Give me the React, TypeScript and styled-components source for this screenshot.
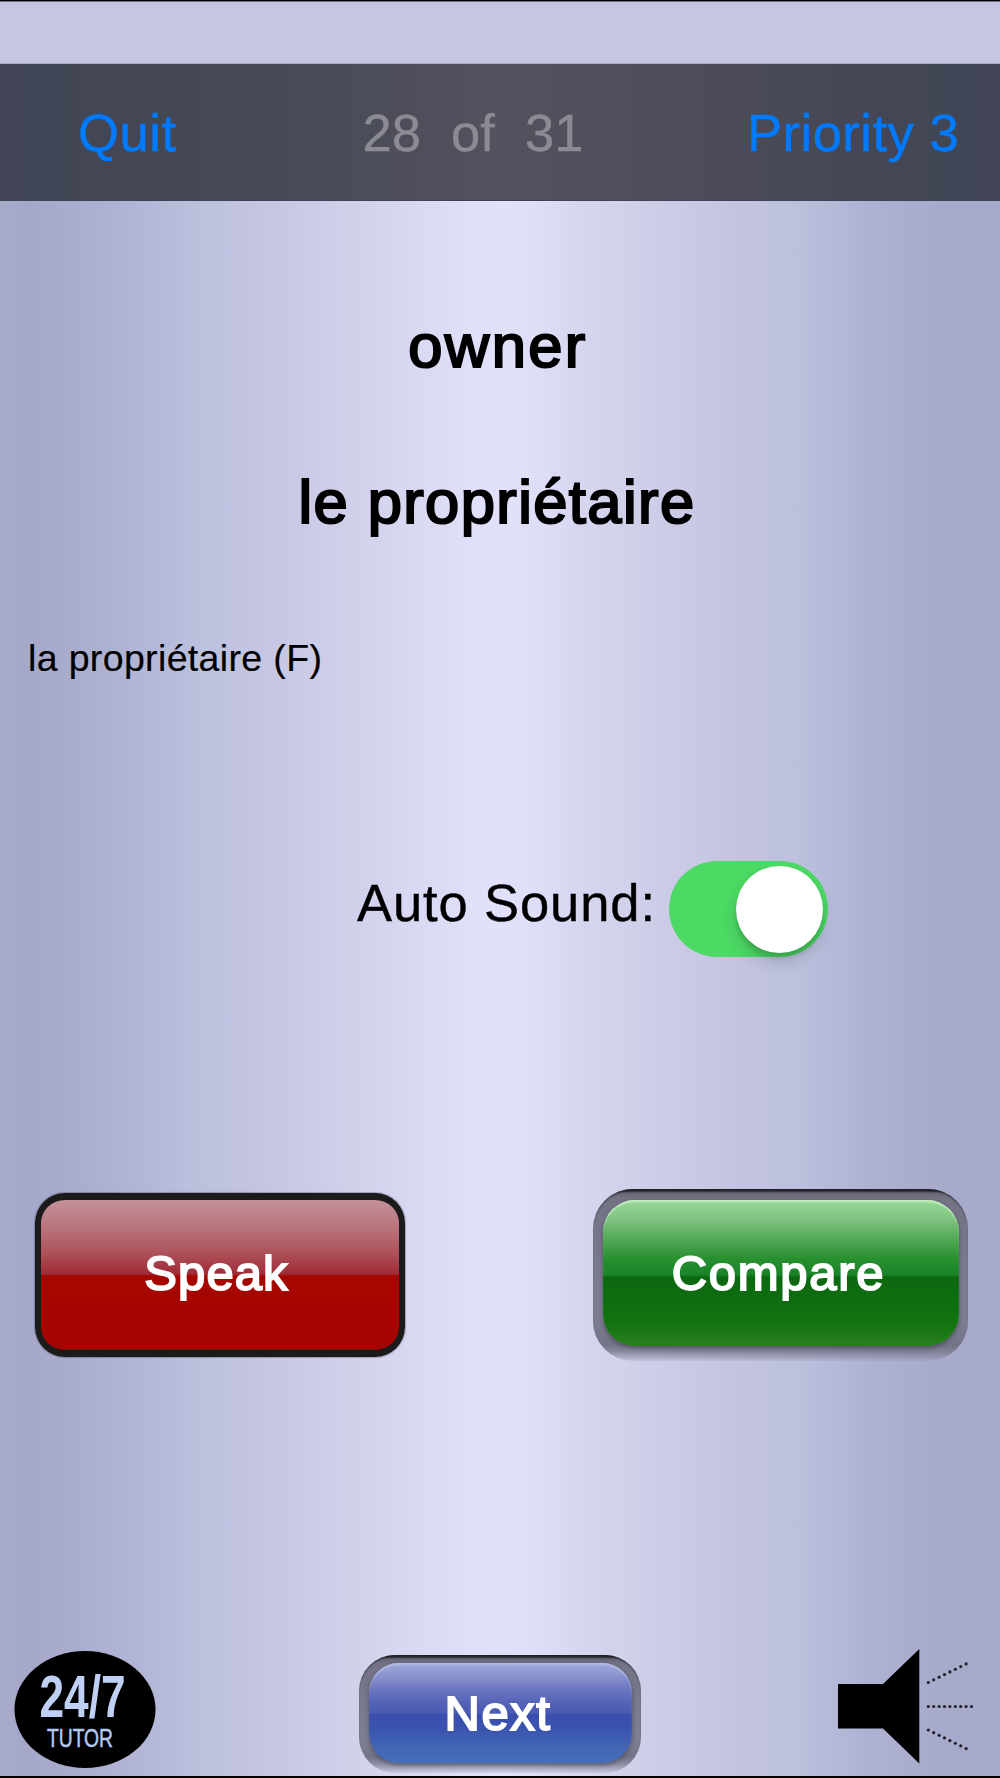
import React, { useState } from "react";
import styled, { createGlobalStyle } from "styled-components";

const GlobalStyle = createGlobalStyle`
  * { box-sizing: border-box; }
  body { margin: 0; background: #000; }
`;

const Screen = styled.div`
  width: 1000px;
  height: 1778px;
  display: flex;
  flex-direction: column;
  overflow: hidden;
  border-top: 1px solid #000;
  border-bottom: 2px solid #000;
  font-family: "Liberation Sans", Arial, Helvetica, sans-serif;
  color: #000;
  background: linear-gradient(
    90deg,
    #a8aaca 0%,
    #a5a8c8 3%,
    #abadce 8%,
    #b1b4d5 13%,
    #bbc0dd 19.5%,
    #c4c5e3 26%,
    #cfcfea 34%,
    #d8d8f3 41%,
    #e1e0fb 47.5%,
    #e2e1fb 50.5%,
    #deddf8 54.5%,
    #d6d6f1 58%,
    #cfcfea 64%,
    #c4c4e2 73.5%,
    #bbc0dd 80%,
    #afb1d2 87%,
    #a6a9c9 95%,
    #a7aaca 100%
  );
`;

const StatusStrip = styled.div`
  height: 63px;
  flex: none;
  background: #c6c6e2;
  border-top: 1px solid #6e6e80;
  border-bottom: 1px solid #a9a9c4;
`;

const Toolbar = styled.header`
  height: 137px;
  flex: none;
  display: grid;
  grid-template-columns: 362.5px 384.5px 253px;
  align-items: center;
  padding-top: 2px;
  font-size: 52.5px;
  line-height: 60px;
  border-bottom: 1px solid #414253;
  background: linear-gradient(90deg, #424556 0%, #404655 5%, #444655 12%, #484a57 28%, #4d4e5a 40%, #53525e 50%, #4e4f5b 62%, #4a4b57 75%, #444655 88%, #404655 96%, #424556 100%);
`;

const BarButton = styled.button<{ $indent: number; $track: number }>`
  padding: 0 0 0 ${(p) => p.$indent}px;
  border: 0;
  background: none;
  color: #007aff;
  font: inherit;
  text-align: left;
  letter-spacing: ${(p) => p.$track}px;
  white-space: nowrap;
  -webkit-text-stroke: 0.5px #007aff;
`;

const Progress = styled.span`
  color: #8b8b94;
  white-space: pre;
  word-spacing: 0.5px;
  -webkit-text-stroke: 0.4px #8b8b94;
`;

const Card = styled.main`
  flex: none;
  display: flex;
  flex-direction: column;
  height: 660px;
  padding-top: 110px;
`;

const Term = styled.h1<{ $track: number; $shift: number }>`
  margin: 0 0 86px;
  padding-right: ${(p) => 6 - p.$shift}px;
  font-size: 61.5px;
  font-weight: 400;
  line-height: 70px;
  text-align: center;
  letter-spacing: ${(p) => p.$track}px;
  -webkit-text-stroke: 2.2px #000;
`;

const Note = styled.p`
  margin: 13px 0 0 28px;
  font-size: 37.5px;
  line-height: 44px;
  letter-spacing: 0.35px;
  -webkit-text-stroke: 0.2px #000;
`;

const SoundRow = styled.label`
  flex: none;
  display: flex;
  align-items: center;
  height: 96px;
  padding-left: 357px;
`;

const SoundLabel = styled.span`
  width: 312px;
  padding-bottom: 12px;
  font-size: 52.5px;
  line-height: 60px;
  letter-spacing: 0.9px;
  white-space: nowrap;
  -webkit-text-stroke: 0.4px #000;
`;

const Track = styled.button<{ $on: boolean }>`
  width: 159px;
  height: 96px;
  padding: 0 5px;
  display: flex;
  align-items: center;
  justify-content: ${(p) => (p.$on ? "flex-end" : "flex-start")};
  border: 0;
  border-radius: 48px;
  background: ${(p) => (p.$on ? "#4cd964" : "#e5e5ea")};
`;

const Knob = styled.span`
  width: 87px;
  height: 87px;
  border-radius: 50%;
  background: #fff;
  box-shadow: 0 9px 16px rgba(0, 0, 0, 0.15), 0 5px 4px rgba(0, 0, 0, 0.12);
`;

const Actions = styled.div`
  flex: none;
  display: flex;
  justify-content: space-between;
  align-items: center;
  height: 172px;
  margin-top: 232px;
  padding: 0 32px 0 35px;
`;

const buttonText = `
  display: flex;
  justify-content: center;
  color: #fff;
  font-family: inherit;
  font-size: 49px;
  line-height: 56px;
  -webkit-text-stroke: 1.9px #fff;
`;

const SpeakButton = styled.button`
  ${buttonText}
  align-items: center;
  width: 370px;
  height: 164px;
  padding: 0 7px 5px 0;
  letter-spacing: 1.1px;
  border: 7px solid #1b1b1b;
  border-left-width: 6px;
  border-right-width: 6px;
  border-radius: 30px;
  box-shadow: 0 0 1px 1px rgba(40, 40, 60, 0.3);
  background: linear-gradient(180deg, #c39299 0%, #b8717a 20%, #ad5059 36%, #9f2a35 49.5%, #a60600 50.5%, #a40500 100%);
`;

const Bezel = styled.span<{ $w: number; $h: number; $pad: string; $r: number }>`
  display: flex;
  width: ${(p) => p.$w}px;
  height: ${(p) => p.$h}px;
  padding: ${(p) => p.$pad};
  border-radius: ${(p) => p.$r}px;
  background: linear-gradient(
    180deg,
    #1d1e24 0,
    #2c2d35 2px,
    #666675 4px,
    #737385 9px,
    #7c7d91 60%,
    #7d7e92 75%,
    #737487 calc(100% - 16px),
    rgba(116, 116, 136, 0.75) calc(100% - 9px),
    rgba(145, 145, 170, 0.2) 100%
  );
  box-shadow: inset 0 2px 2px -1px #1d1e24;
`;

const GlossButton = styled.button<{ $fill: string; $glint: string; $r: number; $pad: string; $track: number }>`
  ${buttonText}
  align-items: center;
  flex: 1;
  padding: ${(p) => p.$pad};
  letter-spacing: ${(p) => p.$track}px;
  border: 0;
  border-radius: ${(p) => p.$r}px;
  background: ${(p) => p.$fill};
  box-shadow: inset 0 3px 2px -1px ${(p) => p.$glint}, 0 2px 4px rgba(40, 40, 60, 0.5);
`;

const GREEN =
  "linear-gradient(180deg, #98d798 0%, #80c481 13%, #53a857 27%, #28902f 40%, #1b832a 51%, #0d690f 53%, #0e6c11 68%, #11740f 84%, #2a7f1f 100%)";
const BLUE =
  "linear-gradient(180deg, #a0a9d9 0%, #8891ce 14%, #6873bf 28%, #5260b6 42%, #4a5bb3 50%, #3b4dad 52%, #3b53af 65%, #4164b4 82%, #466fba 100%)";

const Footer = styled.footer`
  flex: none;
  display: grid;
  grid-template-columns: 359px 479px 162px;
  align-items: start;
  height: 127px;
  margin-top: 288px;
`;

const Logo = styled.svg`
  display: block;
  width: 142px;
  height: 119px;
  margin: 1px 0 0 13.5px;
`;

const NextSlot = styled.div`
  padding-top: 5.5px;
`;

const Speaker = styled.svg`
  display: block;
  width: 140px;
  height: 120px;
`;

const wave = (count: number, y0: number, dy: number) =>
  Array.from({ length: count }, (_, i) => ({ x: 90.3 + i * 5.4, y: y0 + i * dy }));

const DOTS = [...wave(8, 33.5, -2.65), ...wave(9, 57.5, 0), ...wave(8, 81, 2.65)];

export default function App() {
  const [autoSound, setAutoSound] = useState(true);

  return (
    <>
      <GlobalStyle />
      <Screen>
        <StatusStrip />
        <Toolbar>
          <BarButton $indent={78} $track={0.6}>Quit</BarButton>
          <Progress>{"28  of  31"}</Progress>
          <BarButton $indent={0} $track={0.5}>Priority 3</BarButton>
        </Toolbar>
        <Card>
          <Term $track={2.4} $shift={2}>owner</Term>
          <Term $track={1.4} $shift={0}>le propriétaire</Term>
          <Note>la propriétaire (F)</Note>
        </Card>
        <SoundRow>
          <SoundLabel>Auto Sound:</SoundLabel>
          <Track $on={autoSound} role="switch" aria-checked={autoSound} onClick={() => setAutoSound(!autoSound)}>
            <Knob />
          </Track>
        </SoundRow>
        <Actions>
          <SpeakButton>Speak</SpeakButton>
          <Bezel $w={375} $h={172} $pad="11px 9px 15px 10px" $r={40}>
            <GlossButton $fill={GREEN} $glint="#c5efc0" $r={32} $pad="0 5px 0 0" $track={1.7}>
              Compare
            </GlossButton>
          </Bezel>
        </Actions>
        <Footer>
          <Logo viewBox="0 0 142 119">
            <ellipse cx="71" cy="59.5" rx="70.5" ry="58.5" />
            <text x="25.5" y="66.5" fontSize="59" fontWeight="700" fill="#c0d0f4" textLength="86" lengthAdjust="spacingAndGlyphs">24/7</text>
            <text x="33" y="97" fontSize="25.5" fill="#b4c8f0" stroke="#b4c8f0" strokeWidth="0.5" textLength="66" lengthAdjust="spacingAndGlyphs">TUTOR</text>
          </Logo>
          <NextSlot>
            <Bezel $w={282} $h={118} $pad="8px 9px 10px 10px" $r={36}>
              <GlossButton $fill={BLUE} $glint="#b4bce4" $r={30} $pad="1px 5px 0 0" $track={1.6}>
                Next
              </GlossButton>
            </Bezel>
          </NextSlot>
          <Speaker viewBox="0 0 140 120">
            <path d="M-0.5 35H45L81.3 0V114.5L45 79.5H-0.5Z" />
            {DOTS.map((d) => (
              <circle key={`${d.x}-${d.y}`} cx={d.x} cy={d.y} r="1.6" fill="#20212c" />
            ))}
          </Speaker>
        </Footer>
      </Screen>
    </>
  );
}
